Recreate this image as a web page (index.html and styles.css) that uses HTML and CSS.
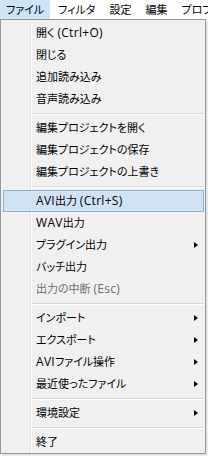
FILE: index.html
```html
<!DOCTYPE html>
<html lang="ja">
<head>
  <meta charset="UTF-8">
  <title>ファイル</title>
  <link rel="stylesheet" href="styles.css">
</head>
<body>
  <div class="menubar">
    <span class="top open">ファイル</span>
    <span class="top">フィルタ</span>
    <span class="top">設定</span>
    <span class="top">編集</span>
    <span class="top">プロファイル</span>
  </div>

  <div class="menu">
    <div class="item">開く <span class="lat">(Ctrl+O)</span></div>
    <div class="item">閉じる</div>
    <div class="item">追加読み込み</div>
    <div class="item">音声読み込み</div>
    <div class="sep"></div>
    <div class="item">編集プロジェクトを開く</div>
    <div class="item">編集プロジェクトの保存</div>
    <div class="item">編集プロジェクトの上書き</div>
    <div class="sep"></div>
    <div class="item hover"><span class="lat">AVI</span>出力 <span class="lat">(Ctrl+S)</span></div>
    <div class="item"><span class="lat">WAV</span>出力</div>
    <div class="item sub">プラグイン出力</div>
    <div class="item">バッチ出力</div>
    <div class="item off">出力の中断 <span class="lat">(Esc)</span></div>
    <div class="sep"></div>
    <div class="item sub">インポート</div>
    <div class="item sub">エクスポート</div>
    <div class="item sub"><span class="lat">AVI</span>ファイル操作</div>
    <div class="item sub">最近使ったファイル</div>
    <div class="sep"></div>
    <div class="item sub">環境設定</div>
    <div class="sep"></div>
    <div class="item">終了</div>
  </div>
</body>
</html>
```

FILE: styles.css
```css
* {
  margin: 0;
  padding: 0;
  box-sizing: border-box;
}
body {
  font-family: "Open Sans", "Noto Sans CJK JP", sans-serif;
  font-size: 11px;
  font-feature-settings: "palt";
  color: #000;
  background: #fff;
  width: 208px;
  height: 456px;
  overflow: hidden;
}
.menubar {
  display: flex;
  height: 19px;
  line-height: 19px;
  white-space: nowrap;
  background: #fff;
}
.top {
  padding: 0 6px;
  margin-right: 2px;
}
.open {
  background: #cce4f7;
}
.menu {
  width: 206px;
  background: #f0f0f0;
  border: 1px solid #979797;
  padding-top: 2px;
  position: relative;
  box-shadow: 2px 2px 2px rgba(0, 0, 0, 0.12);
}
/* icon gutter line */
.menu::before {
  content: "";
  position: absolute;
  top: 2px;
  bottom: 0;
  left: 29px;
  width: 1px;
  background: #e2e3e3;
  border-right: 1px solid #fff;
  box-sizing: content-box;
}
.item {
  position: relative;
  height: 22px;
  line-height: 22px;
  padding-left: 34px;
  margin: 0 1px;
  white-space: nowrap;
}
.lat {
  font-size: 12px;
  letter-spacing: 0.3px;
}
.hover {
  background: #d1e2f3;
  border: 1px solid #8cb1e0;
  margin: 0 1px 0 2px;
  padding-left: 32px;
  line-height: 20px;
}
.off {
  color: #6d6d6d;
}
.sub::after {
  content: "";
  position: absolute;
  left: 192px;
  top: 8px;
  border-left: 4px solid #000;
  border-top: 3.5px solid transparent;
  border-bottom: 3.5px solid transparent;
}
.sep {
  height: 7px;
  margin-left: 30px;
  padding-top: 3px;
}
.sep::before {
  content: "";
  display: block;
  height: 1px;
  margin-right: 1px;
  background: #d7d7d7;
  border-bottom: 1px solid #fff;
  box-sizing: content-box;
}
```
